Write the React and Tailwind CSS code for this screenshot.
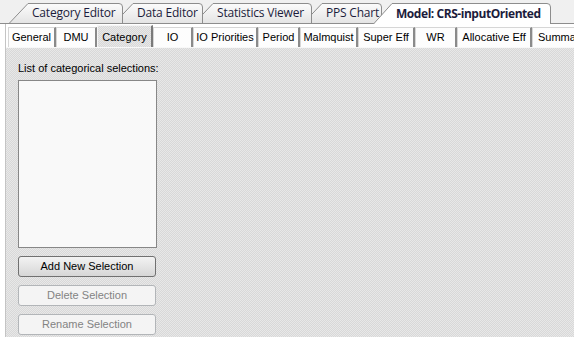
import React from "react";

const docTabs = [
  { label: "Category Editor", w: 114, cls: "w-[114px] z-[5]" },
  { label: "Data Editor", w: 89, cls: "w-[89px] -ml-[9px] z-[4]" },
  { label: "Statistics Viewer", w: 118, cls: "w-[118px] -ml-[9px] z-[3]" },
  { label: "PPS Chart", w: 79, cls: "w-[79px] -ml-[9px] z-[2]" },
  { label: "Model: CRS-inputOriented", w: 178, cls: "w-[178px] -ml-[9px] z-[10]", active: true },
];

const pageTabs = [
  { label: "General", cls: "w-[48px]" },
  { label: "DMU", cls: "w-[41px]" },
  { label: "Category", cls: "w-[56px]", active: true },
  { label: "IO", cls: "w-[40px]" },
  { label: "IO Priorities", cls: "w-[65px]" },
  { label: "Period", cls: "w-[42px]" },
  { label: "Malmquist", cls: "w-[58px]" },
  { label: "Super Eff", cls: "w-[57px]" },
  { label: "WR", cls: "w-[42px]" },
  { label: "Allocative Eff", cls: "w-[75px]" },
  { label: "Summary", cls: "w-[60px]" },
];

const dither =
  "bg-[image:repeating-conic-gradient(#d8d8d8_0_25%,#e8e8e8_0_50%)] bg-[length:2px_2px]";

function DocTab({ tab }) {
  const h = tab.active ? 21 : 20;
  const w = tab.w;
  const s = 19;
  const edge = `M0.5,${h} L${s},0.5 L${w - 4},0.5 Q${w - 0.5},0.5 ${w - 0.5},4 L${w - 0.5},${h}`;
  const gid = tab.active ? "gsel" : "gtab";
  return (
    <div className={`relative shrink-0 flex items-center ${tab.cls} ${tab.active ? "h-[21px] -mb-[1px]" : "h-[20px]"}`}>
      <svg className="absolute inset-0" width={w} height={h} viewBox={`0 0 ${w} ${h}`}>
        <defs>
          <linearGradient id={gid} x1="0" y1="0" x2="0" y2="1">
            <stop offset="0" stopColor={tab.active ? "#ffffff" : "#fcfcfc"} />
            <stop offset="1" stopColor={tab.active ? "#ffffff" : "#e4e4e4"} />
          </linearGradient>
        </defs>
        <path d={`${edge} Z`} fill={`url(#${gid})`} />
        <path d={edge} fill="none" stroke="#8d8d8d" strokeWidth="1" />
      </svg>
      <span
        className={`relative pl-[23px] whitespace-nowrap text-[12px] leading-none text-[#1c1c3c] font-['Open_Sans',sans-serif] ${tab.active ? "font-bold tracking-[-0.45px]" : "tracking-[-0.2px]"}`}
      >
        {tab.label}
      </span>
    </div>
  );
}

function PageTab({ tab }) {
  if (tab.active) {
    return (
      <div className={`shrink-0 h-[23px] -mb-[1px] relative z-[2] flex items-center justify-center border-l border-t border-[#f5f5f5] border-r-2 border-r-[#7a7a7a] ${dither} ${tab.cls}`}>
        <span className="text-[11px] text-black whitespace-nowrap">{tab.label}</span>
      </div>
    );
  }
  return (
    <div className={`shrink-0 h-[20px] flex items-center justify-center bg-[#fdfdfd] border-l border-t border-[#d6d6d6] border-r-2 border-r-[#8a8a8a] ${tab.cls}`}>
      <span className="text-[11px] text-black whitespace-nowrap">{tab.label}</span>
    </div>
  );
}

export default function App() {
  return (
    <div className="w-[574px] h-[337px] overflow-hidden bg-white flex flex-col font-['Liberation_Sans',Arial,sans-serif]">
      <div className="h-[24px] shrink-0 bg-[#f0f0f0] border-b border-[#8d8d8d] flex items-end pl-[9px] overflow-visible">
        {docTabs.map((t) => (
          <DocTab key={t.label} tab={t} />
        ))}
      </div>

      <div className="flex-1 ml-[5px] border-l border-[#c4c4c4] flex flex-col">
        <div className="h-[23px] shrink-0 flex items-end pl-[2px] overflow-hidden">
          {pageTabs.map((t) => (
            <PageTab key={t.label} tab={t} />
          ))}
        </div>

        <div className={`flex-1 border-t border-[#f8f8f8] ${dither} pl-[12px] pt-[14px] flex flex-col`}>
          <div className="text-[11px] leading-[13px] text-black">List of categorical selections:</div>
          <div className="mt-[5px] w-[139px] h-[168px] border border-[#878787] bg-[#f9f9f9]" />
          <div className="mt-[8px] flex flex-col gap-[8px]">
            <button className="w-[138px] h-[21px] rounded-[3px] border border-[#707070] bg-gradient-to-b from-[#f3f3f3] to-[#d6d6d6] text-[11px] text-black">
              Add New Selection
            </button>
            <button disabled className="w-[138px] h-[21px] rounded-[3px] border border-[#b2b5b8] bg-[#f4f4f4] text-[11px] text-[#838383]">
              Delete Selection
            </button>
            <button disabled className="w-[138px] h-[21px] rounded-[3px] border border-[#b2b5b8] bg-[#f4f4f4] text-[11px] text-[#838383]">
              Rename Selection
            </button>
          </div>
        </div>
      </div>
    </div>
  );
}
